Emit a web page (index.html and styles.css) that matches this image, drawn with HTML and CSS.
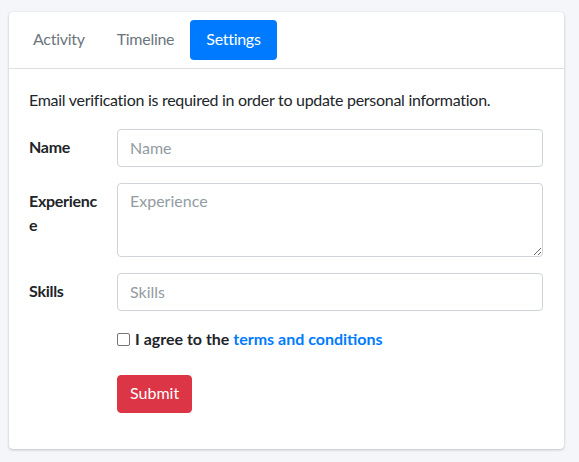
FILE: index.html
```html
<!DOCTYPE html>
<html>
<head>
<meta charset="utf-8">
<link rel="stylesheet" href="styles.css">
</head>
<body>
<div class="page">
  <div class="card">
    <div class="card-header">
      <a class="pill" href="#">Activity</a>
      <a class="pill" href="#">Timeline</a>
      <a class="pill active" href="#">Settings</a>
    </div>
    <div class="card-body">
      <p class="intro">Email verification is required in order to update personal information.</p>
      <div class="row">
        <label class="label">Name</label>
        <div class="field"><input class="control" type="text" placeholder="Name"></div>
      </div>
      <div class="row">
        <label class="label">Experienc<br>e</label>
        <div class="field"><textarea class="control area" placeholder="Experience"></textarea></div>
      </div>
      <div class="row">
        <label class="label">Skills</label>
        <div class="field"><input class="control" type="text" placeholder="Skills"></div>
      </div>
      <div class="row">
        <div class="label"></div>
        <div class="field check-line">
          <span class="box"></span>
          <span class="check-text">I agree to the <a href="#" class="link">terms and conditions</a></span>
        </div>
      </div>
      <div class="row">
        <div class="label"></div>
        <div class="field"><button class="btn">Submit</button></div>
      </div>
    </div>
  </div>
</div>
</body>
</html>
```

FILE: styles.css
```css
* { box-sizing: border-box; }
html, body { margin: 0; padding: 0; }
body {
  background: #f4f6f9;
  font-family: Lato, "Noto Sans", sans-serif;
  font-size: 16px;
  line-height: 24px;
  letter-spacing: -0.28px;
  color: #212529;
}
.page { padding: 12px 15px 12px 9px; }
.card {
  width: 555px;
  background: #fff;
  border-radius: 4px;
  box-shadow: 0 0 1px rgba(0,0,0,.125), 0 1px 3px rgba(0,0,0,.2);
}
.card-header {
  display: flex;
  padding: 8px;
  border-bottom: 1px solid rgba(0,0,0,.125);
}
.pill {
  display: block;
  padding: 7px 16px 9px;
  color: #6c757d;
  text-decoration: none;
  border-radius: 4px;
}
.pill.active { background: #007bff; color: #fff; }
.card-body { padding: 19px 21px 20px 20px; }
.intro { margin: 0 0 17px; }
.row { display: flex; margin-bottom: 16px; }
.label {
  flex: 0 0 88px;
  padding-top: 6px;
  font-weight: 700;
  white-space: nowrap;
}
.field { flex: 1; }
.control {
  display: block;
  width: 100%;
  height: 38px;
  padding: 5px 12px 7px;
  font: inherit;
  line-height: 24px;
  color: #495057;
  border: 1px solid #ced4da;
  border-radius: 4px;
  background: #fff;
}
.control::placeholder { color: #939ba2; }
.area { height: 74px; }
.check-line { display: flex; align-items: center; gap: 5px; height: 24px; margin-bottom: 8px; }
.box {
  width: 13px; height: 13px;
  border: 1.5px solid #767676;
  border-radius: 2px;
  background: #fff;
}
.check-text { font-weight: 700; letter-spacing: 0; }
.link { color: #007bff; text-decoration: none; }
.btn {
  font: inherit;
  line-height: 24px;
  padding: 5px 12px 7px;
  color: #fff;
  background: #dc3545;
  border: 1px solid #dc3545;
  border-radius: 4px;
}
```
